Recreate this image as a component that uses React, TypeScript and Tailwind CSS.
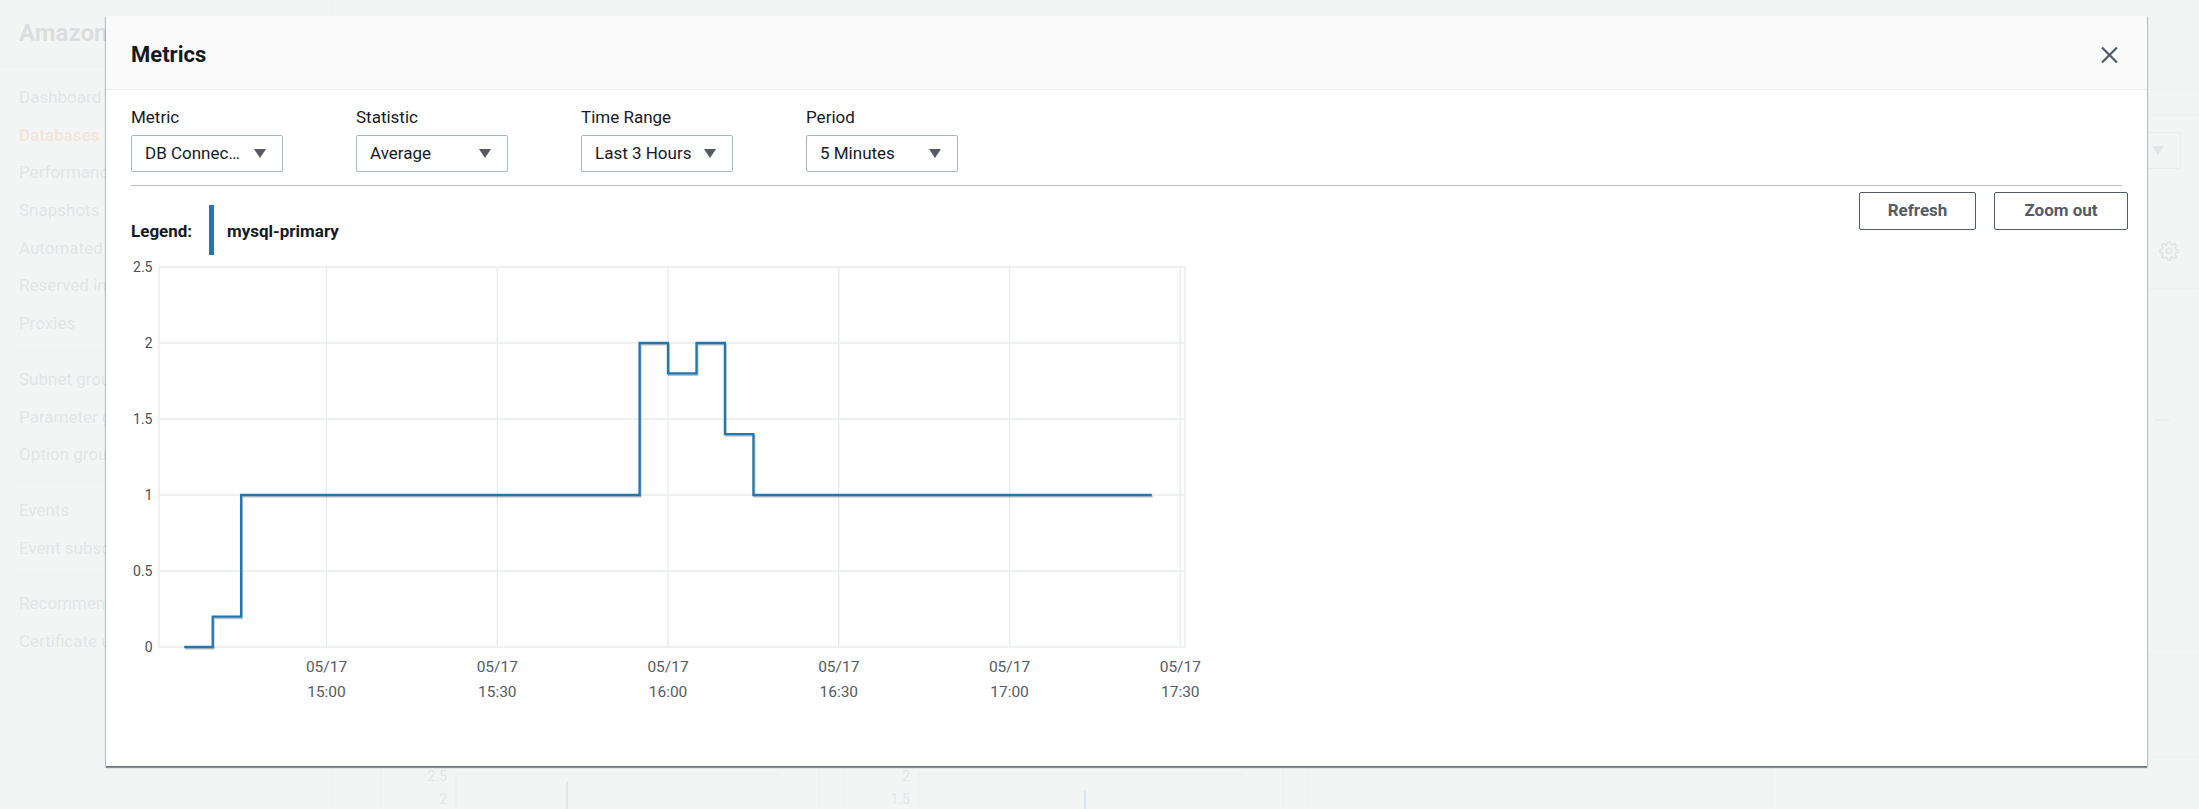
import React from "react";

const NAV_GROUPS: string[][] = [
  ["Dashboard", "Databases", "Performance insights", "Snapshots", "Automated backups", "Reserved instances", "Proxies"],
  ["Subnet groups", "Parameter groups", "Option groups"],
  ["Events", "Event subscriptions"],
  ["Recommendations", "Certificate update"],
];

function Caret({ color = "#545b64" }: { color?: string }) {
  return (
    <svg width="12" height="9" viewBox="0 0 12 9" className="shrink-0">
      <path d="M0 0 H12 L6 9 Z" fill={color} />
    </svg>
  );
}

function Select({ label, value }: { label: string; value: string }) {
  return (
    <div className="w-[225px] flex flex-col">
      <div className="h-[22px] leading-[22px] text-[17px] text-[#16191f]">{label}</div>
      <div className="mt-[7px] w-[152px] h-[37px] border border-[#aab7b8] rounded-[2px] flex items-center justify-between pl-[13px] pr-[16px] text-[17px] text-[#16191f] whitespace-nowrap">
        <span>{value}</span>
        <Caret />
      </div>
    </div>
  );
}

const X = (i: number) => 326.5 + (i - 5) * 28.46;
const Y = (v: number) => 647 - 152 * v;

const VALUES: number[] = [
  0, 0.2,
  1, 1, 1, 1, 1, 1, 1, 1, 1, 1, 1, 1, 1, 1,
  2, 1.8, 2, 1.4,
  1, 1, 1, 1, 1, 1, 1, 1, 1, 1, 1, 1, 1, 1,
];

function buildPath() {
  let d = `M${X(0)} ${Y(VALUES[0])}`;
  for (let i = 1; i < VALUES.length; i++) {
    d += ` H${X(i).toFixed(1)} V${Y(VALUES[i]).toFixed(1)}`;
  }
  d += ` H${X(VALUES.length).toFixed(1)}`;
  return d;
}

const TICKS = [
  { i: 5, t: "15:00" },
  { i: 11, t: "15:30" },
  { i: 17, t: "16:00" },
  { i: 23, t: "16:30" },
  { i: 29, t: "17:00" },
  { i: 35, t: "17:30" },
];

function Chart() {
  const path = buildPath();
  const yTicks = [0, 0.5, 1, 1.5, 2, 2.5];
  return (
    <svg width="1080" height="460" viewBox="131 255 1080 460" className="block">
      {yTicks.map((v) => (
        <line key={v} x1={159} x2={1185} y1={Y(v)} y2={Y(v)} stroke="#eaeded" strokeWidth={1.5} />
      ))}
      {[159, ...TICKS.map((t) => X(t.i)), 1185].map((x, k) => (
        <line key={k} x1={x} x2={x} y1={Y(2.5)} y2={Y(0)} stroke="#eaeded" strokeWidth={1.5} />
      ))}
      {yTicks.map((v) => (
        <text key={v} x={152.5} y={Y(v) + 5} textAnchor="end" fontSize="14" fill="#4b4f54">
          {String(v)}
        </text>
      ))}
      {TICKS.map((t) => (
        <g key={t.t}>
          <text x={X(t.i)} y={672.3} textAnchor="middle" fontSize="15.5" fill="#545b64">05/17</text>
          <text x={X(t.i)} y={697.3} textAnchor="middle" fontSize="15.5" fill="#545b64">{t.t}</text>
        </g>
      ))}
      <path d={path} fill="none" stroke="rgba(0,0,0,0.24)" strokeWidth={2} transform="translate(1,1.6)" />
      <path d={path} fill="none" stroke="#1f77b4" strokeWidth={2.3} />
    </svg>
  );
}

function MiniChart({ labels, spikeX, spikeTop }: { labels: string[]; spikeX: number; spikeTop: number }) {
  return (
    <svg width="438" height="60" viewBox="0 0 438 60" className="block">
      <line x1={74} x2={399} y1={16} y2={16} stroke="#aab7b8" />
      <line x1={74} x2={74} y1={16} y2={60} stroke="#aab7b8" />
      <text x={65} y={23} textAnchor="end" fontSize="14" fill="#545b64">{labels[0]}</text>
      <text x={65} y={46} textAnchor="end" fontSize="14" fill="#545b64">{labels[1]}</text>
      <line x1={spikeX} x2={spikeX} y1={spikeTop} y2={60} stroke="#1f77b4" strokeWidth={2} />
    </svg>
  );
}

function Background() {
  return (
    <div className="flex h-[809px] w-full">
      <nav className="w-[332px] shrink-0 border-r border-[#d5dbdb] bg-white flex flex-col">
        <div className="h-[67px] border-b border-[#d5dbdb] flex items-center pl-[19px]">
          <div className="w-[100px] overflow-hidden whitespace-nowrap text-[24px] font-bold text-[#16191f]">Amazon RDS</div>
        </div>
        <div className="pt-[12px] pl-[19px] pr-[20px]">
          {NAV_GROUPS.map((g, gi) => (
            <div key={gi}>
              {gi > 0 && <div className="h-px bg-[#d5dbdb] mt-[7px] mb-[10px]" />}
              {g.map((item) => (
                <div
                  key={item}
                  className={
                    "w-[100px] overflow-hidden h-[37.7px] leading-[37.7px] text-[17px] whitespace-nowrap " +
                    (item === "Databases" ? "text-[#ec7211] font-bold" : "text-[#545b64]")
                  }
                >
                  {item}
                </div>
              ))}
            </div>
          ))}
        </div>
      </nav>
      <main className="flex-1 flex flex-col pl-[49px] min-w-0">
        <div className="h-[90px] border-b border-[#d5dbdb] shrink-0" />
        <div className="mt-[25px] h-[174px] bg-white border-y border-[#d5dbdb] flex flex-col items-end pr-[18px] shrink-0">
          <div className="mt-[16px] w-[140px] h-[37px] border border-[#aab7b8] rounded-[2px] flex items-center justify-end pr-[16px]">
            <Caret />
          </div>
          <svg width="20" height="20" viewBox="0 0 24 24" className="mt-[72px] mr-[2px]" fill="none" stroke="#545b64" strokeWidth="2">
            <circle cx="12" cy="12" r="3" />
            <path d="M19.4 15a1.7 1.7 0 0 0 .3 1.8l.1.1a2 2 0 1 1-2.8 2.8l-.1-.1a1.7 1.7 0 0 0-1.8-.3 1.7 1.7 0 0 0-1 1.5V21a2 2 0 1 1-4 0v-.1a1.7 1.7 0 0 0-1.1-1.5 1.7 1.7 0 0 0-1.8.3l-.1.1a2 2 0 1 1-2.8-2.8l.1-.1a1.7 1.7 0 0 0 .3-1.8 1.7 1.7 0 0 0-1.5-1H3a2 2 0 1 1 0-4h.1a1.7 1.7 0 0 0 1.5-1.1 1.7 1.7 0 0 0-.3-1.8l-.1-.1a2 2 0 1 1 2.8-2.8l.1.1a1.7 1.7 0 0 0 1.8.3H9a1.7 1.7 0 0 0 1-1.5V3a2 2 0 1 1 4 0v.1a1.7 1.7 0 0 0 1 1.5 1.7 1.7 0 0 0 1.8-.3l.1-.1a2 2 0 1 1 2.8 2.8l-.1.1a1.7 1.7 0 0 0-.3 1.8V9a1.7 1.7 0 0 0 1.5 1H21a2 2 0 1 1 0 4h-.1a1.7 1.7 0 0 0-1.5 1z" />
          </svg>
        </div>
        <div className="h-[366px] bg-white border-b border-[#d5dbdb] shrink-0 flex justify-end items-start pr-[30px] pt-[130px]">
          <div className="w-[14px] h-[2px] bg-[#aab7b8]" />
        </div>
        <div className="mt-[102px] grid grid-cols-[438px_439px_438px_438px] gap-[25px] shrink-0">
          <div className="h-[60px] bg-white border-x border-t border-[#d5dbdb]">
            <MiniChart labels={["2.5", "2"]} spikeX={185} spikeTop={23} />
          </div>
          <div className="h-[60px] bg-white border-x border-t border-[#d5dbdb]">
            <MiniChart labels={["2", "1.5"]} spikeX={240} spikeTop={33} />
          </div>
          <div className="h-[60px] bg-white border-x border-t border-[#d5dbdb]" />
          <div className="h-[60px] bg-white border-x border-t border-[#d5dbdb]" />
        </div>
      </main>
    </div>
  );
}

export default function App() {
  return (
    <div className="relative w-full h-[809px] overflow-hidden bg-[#f2f3f3] font-['Roboto','Noto_Sans',sans-serif]">
      <Background />
      <div className="absolute inset-0 bg-[#f2f3f3]/90" />
      <div className="absolute left-[106px] top-[16px] w-[2041px] h-[750px] bg-white shadow-[0_2px_1px_0_rgba(0,28,36,0.4),1px_1px_1px_0_rgba(0,28,36,0.18),-1px_1px_1px_0_rgba(0,28,36,0.18)] flex flex-col">
        <div className="h-[74px] shrink-0 bg-[#fafafa] border-b border-[#eaeded] flex items-center justify-between pl-[25px] pr-[29px]">
          <h2 className="pt-[4px] text-[22px] font-bold text-[#16191f]">Metrics</h2>
          <svg width="17" height="16" viewBox="0 0 17 16" className="mt-[4px]">
            <path d="M1 0.5 L16 15.5 M16 0.5 L1 15.5" stroke="#545b64" strokeWidth="2.2" />
          </svg>
        </div>
        <div className="pt-[16px] px-[25px] flex flex-col">
          <div className="flex">
            <Select label="Metric" value="DB Connec…" />
            <Select label="Statistic" value="Average" />
            <Select label="Time Range" value="Last 3 Hours" />
            <Select label="Period" value="5 Minutes" />
          </div>
          <div className="mt-[13px] h-px bg-[#b9bfc2]" />
          <div className="flex items-start justify-between">
            <div className="mt-[19px] h-[50px] flex items-center">
              <span className="pt-[3px] w-[78px] text-[17px] font-bold text-[#16191f]">Legend:</span>
              <span className="w-[5px] h-[50px] bg-[#1f77b4]" />
              <span className="pt-[3px] ml-[13px] text-[17px] font-bold text-[#16191f]">mysql-primary</span>
            </div>
            <div className="mt-[6px] -mr-[6px] flex gap-[18px]">
              <button className="w-[117px] h-[38px] border border-[#545b64] rounded-[2px] bg-white text-[17px] font-bold text-[#545b64] flex items-center justify-center">
                Refresh
              </button>
              <button className="w-[134px] h-[38px] border border-[#545b64] rounded-[2px] bg-white text-[17px] font-bold text-[#545b64] flex items-center justify-center">
                Zoom out
              </button>
            </div>
          </div>
          <Chart />
        </div>
      </div>
    </div>
  );
}
